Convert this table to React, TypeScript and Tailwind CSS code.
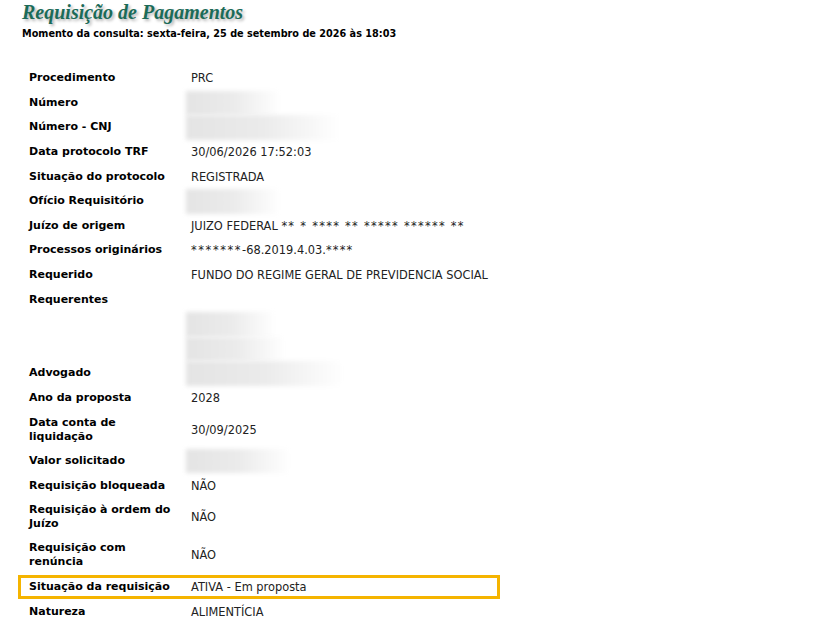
import React from 'react';

type Row = {
  label: React.ReactNode;
  value?: React.ReactNode;
  blur?: string;
  tall?: boolean;
  highlight?: boolean;
};

const Redacted = ({ className }: { className: string }) => (
  <div className={`absolute inset-y-0 left-[-5px] bg-linear-to-r from-[#e4e4e4] via-[#ebebeb] to-white blur-[2px] ${className}`} />
);

const rows: Row[] = [
  { label: 'Procedimento', value: 'PRC' },
  { label: 'Número', blur: 'w-[95px]' },
  { label: 'Número - CNJ', blur: 'w-[155px]' },
  { label: 'Data protocolo TRF', value: '30/06/2026 17:52:03' },
  { label: 'Situação do protocolo', value: 'REGISTRADA' },
  { label: 'Ofício Requisitório', blur: 'w-[95px]' },
  {
    label: 'Juízo de origem',
    value: (
      <span>
        JUIZO FEDERAL <span className="tracking-[1.3px]">** * **** ** ***** ****** **</span>
      </span>
    ),
  },
  {
    label: 'Processos originários',
    value: (
      <span>
        <span className="tracking-[1.6px]">*******</span>-68.2019.4.03.
        <span className="tracking-[1.2px]">****</span>
      </span>
    ),
  },
  { label: 'Requerido', value: 'FUNDO DO REGIME GERAL DE PREVIDENCIA SOCIAL' },
  { label: 'Requerentes' },
  { label: '', blur: 'w-[90px]' },
  { label: '', blur: 'w-[100px]' },
  { label: 'Advogado', blur: 'w-[158px]' },
  { label: 'Ano da proposta', value: '2028' },
  { label: <>Data conta de<br />liquidação</>, value: '30/09/2025', tall: true },
  { label: 'Valor solicitado', blur: 'w-[105px]' },
  { label: 'Requisição bloqueada', value: 'NÃO' },
  { label: <>Requisição à ordem do<br />Juízo</>, value: 'NÃO', tall: true },
  { label: <>Requisição com<br />renúncia</>, value: 'NÃO', tall: true },
  { label: 'Situação da requisição', value: 'ATIVA - Em proposta', highlight: true },
  { label: 'Natureza', value: 'ALIMENTÍCIA' },
];

export default function App() {
  return (
    <div className="min-h-screen bg-white px-[18px] font-['DejaVu_Sans',Verdana,sans-serif]">
      <h1 className="pl-[4px] pt-[1px] font-['Liberation_Serif',Georgia,serif] text-[20px] leading-[22px] font-bold italic text-[#1b6b58] [text-shadow:2px_2px_3px_rgba(0,0,0,0.3)]">
        Requisição de Pagamentos
      </h1>
      <p className="mt-[4px] pl-[4px] text-[9.7px] leading-[14px] font-bold text-black">
        Momento da consulta: sexta-feira, 25 de setembro de 2026 às 18:03
      </p>

      {/* Dados da requisição */}
      <div className="mt-[25px] w-[482px]">
        {rows.map((row, i) => (
          <div
            key={i}
            className={`flex items-center ${row.tall ? 'h-[38.4px]' : 'h-[24.6px]'} ${
              row.highlight ? 'ring-[3px] ring-inset ring-[#f5b400]' : ''
            }`}
          >
            <div className="w-[173px] shrink-0 whitespace-nowrap pl-[11px] text-[11px] leading-[14px] font-bold text-black">
              {row.label}
            </div>
            <div className="relative flex h-full flex-1 items-center text-[11.4px] leading-[14px] text-[#222]">
              {row.blur && <Redacted className={row.blur} />}
              {row.value}
            </div>
          </div>
        ))}
      </div>
    </div>
  );
}
